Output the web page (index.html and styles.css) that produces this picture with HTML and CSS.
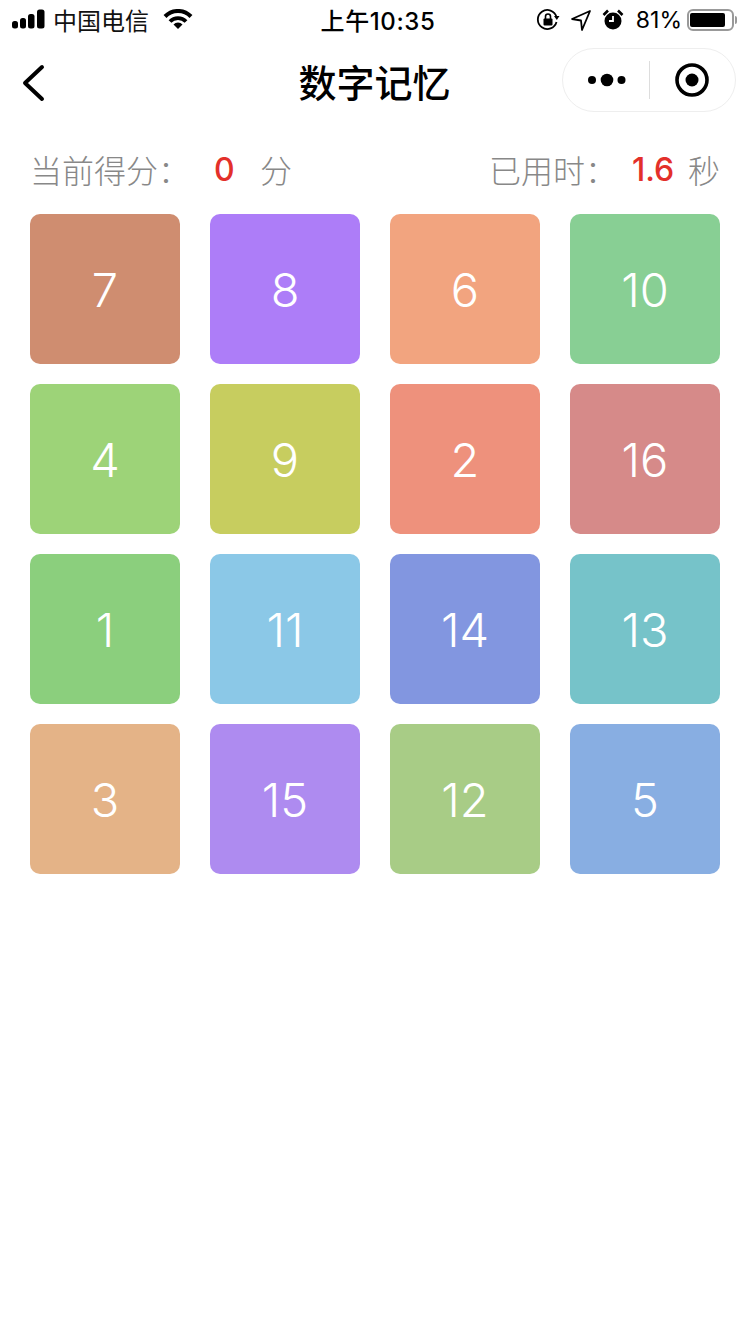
FILE: index.html
```html
<!DOCTYPE html>
<html lang="en">
<head>
    <meta charset="UTF-8">
    <meta name="viewport" content="width=device-width, initial-scale=1.0">
    <title>数字记忆</title>
    <link rel="stylesheet" href="styles.css">
</head>
<body>
    <div class="status-bar">
        <div class="status-left">
            <svg class="signal" width="33" height="20" viewBox="0 0 33 20">
                <rect x="0" y="12" width="6" height="7.500" rx="2.500" fill="#000"/>
                <rect x="8" y="9" width="6" height="10.500" rx="2.500" fill="#000"/>
                <rect x="16" y="5" width="6.500" height="14.500" rx="2.500" fill="#000"/>
                <rect x="25" y="0.500" width="7.500" height="19" rx="2.500" fill="#000"/>
            </svg>
            <span class="carrier">中国电信</span>
            <svg class="wifi" width="30" height="20" viewBox="0 0 30 20">
                <path d="M2 7.500 A18 18 0 0 1 28 7.500" fill="none" stroke="#000" stroke-width="4"/>
                <path d="M7 12.500 A11 11 0 0 1 23 12.500" fill="none" stroke="#000" stroke-width="3.800"/>
                <path d="M10.500 15.500 A6 6 0 0 1 19.500 15.500 L15 20 Z" fill="#000"/>
            </svg>
        </div>
        <div class="status-time">上午10:35</div>
        <div class="status-right">
            <svg width="24" height="24" viewBox="0 0 24 24">
                <path d="M20.500 14 A9.500 9.500 0 1 1 20.500 9" fill="none" stroke="#000" stroke-width="1.800"/>
                <path d="M18 8 L23.500 8 L20.800 12 Z" fill="#000"/>
                <rect x="7.500" y="10.500" width="9" height="7" rx="1" fill="#000"/>
                <path d="M9.500 11 V8.500 A2.500 2.500 0 0 1 14.500 8.500 V11" fill="none" stroke="#000" stroke-width="1.600"/>
            </svg>
            <svg width="22" height="24" viewBox="0 0 22 24">
                <path d="M20 3 L2 11 L11 12.500 L12 22 Z" fill="none" stroke="#000" stroke-width="1.800" stroke-linejoin="round"/>
            </svg>
            <svg width="22" height="24" viewBox="0 0 22 24">
                <circle cx="11" cy="13" r="8.500" fill="#000"/>
                <path d="M11 8 V13 H7" fill="none" stroke="#fff" stroke-width="1.800"/>
                <path d="M1.500 7 L6 2.500 M20.500 7 L16 2.500" stroke="#000" stroke-width="2.600"/>
            </svg>
            <span class="battery-text">81%</span>
            <div class="battery">
                <div class="battery-level"></div>
            </div>
            <div class="battery-cap"></div>
        </div>
    </div>

    <div class="nav-bar">
        <svg class="back" width="26" height="38" viewBox="0 0 26 38">
            <path d="M22 3 L5 19 L22 35" fill="none" stroke="#000" stroke-width="4" stroke-linecap="round" stroke-linejoin="round"/>
        </svg>
        <h1 class="nav-title">数字记忆</h1>
        <div class="capsule">
            <div class="capsule-part">
                <svg class="menu-dots" width="38" height="14" viewBox="0 0 38 14">
                    <circle cx="4" cy="7" r="4" fill="#000"/>
                    <circle cx="19" cy="7" r="6.300" fill="#000"/>
                    <circle cx="33.500" cy="7" r="4" fill="#000"/>
                </svg>
            </div>
            <div class="capsule-line"></div>
            <div class="capsule-part">
                <svg width="34" height="34" viewBox="0 0 34 34">
                    <circle cx="17" cy="17" r="15" fill="none" stroke="#000" stroke-width="3.600"/>
                    <circle cx="17" cy="17" r="6.500" fill="#000"/>
                </svg>
            </div>
        </div>
    </div>

    <div class="score-row">
        <div class="score-group">
            <span class="score-label">当前得分：</span>
            <span class="score-value score-zero">0</span>
            <span class="score-unit">分</span>
        </div>
        <div class="score-group">
            <span class="time-label">已用时：</span>
            <span class="score-value time-value">1.6</span>
            <span class="time-unit">秒</span>
        </div>
    </div>

    <div class="grid">
        <div class="cell c1">7</div>
        <div class="cell c2">8</div>
        <div class="cell c3">6</div>
        <div class="cell c4">10</div>
        <div class="cell c5">4</div>
        <div class="cell c6">9</div>
        <div class="cell c7">2</div>
        <div class="cell c8">16</div>
        <div class="cell c9">1</div>
        <div class="cell c10">11</div>
        <div class="cell c11">14</div>
        <div class="cell c12">13</div>
        <div class="cell c13">3</div>
        <div class="cell c14">15</div>
        <div class="cell c15">12</div>
        <div class="cell c16">5</div>
    </div>
</body>
</html>
```

FILE: styles.css
```css
/* Global Styles */
* {
    box-sizing: border-box;
    margin: 0;
    padding: 0;
}

body {
    width: 750px;
    height: 1334px;
    background-color: #ffffff;
    color: #000;
    font-family: "Inter", "Noto Sans CJK SC", sans-serif;
    overflow: hidden;
}

/* Status Bar */
.status-bar {
    height: 40px;
    padding: 0 13px 2px 12px;
    display: grid;
    grid-template-columns: 1fr auto 1fr;
    align-items: center;
}

.status-left,
.status-right {
    display: flex;
    align-items: center;
}

.status-right {
    justify-content: flex-end;
    padding-top: 2px;
}

.signal {
    margin-right: 8px;
}

.carrier {
    font-size: 24px;
    margin-right: 14px;
    color: #111;
}

.status-time {
    font-size: 24px;
    font-weight: 500;
    letter-spacing: 0.6px;
    margin-left: 7px;
}

.status-right svg {
    margin-right: 10px;
}

.battery-text {
    font-size: 23px;
    margin-left: 2px;
    margin-right: 5px;
}

.battery {
    width: 47px;
    height: 22px;
    border: 2px solid #999;
    border-radius: 6px;
    padding: 2px 1px;
}

.battery-level {
    width: 85%;
    height: 100%;
    background-color: #000;
    border-radius: 2px;
}

.battery-cap {
    width: 2px;
    height: 8px;
    margin-left: 1px;
    background-color: #999;
    border-radius: 0 2px 2px 0;
}

/* Nav Bar */
.nav-bar {
    height: 88px;
    padding-bottom: 6px;
    position: relative;
    display: flex;
    align-items: center;
    justify-content: center;
}

.back {
    position: absolute;
    left: 20px;
    top: 24px;
}

.nav-title {
    font-size: 38px;
    font-weight: 500;
    line-height: 1;
    margin-left: -1px;
    font-family: "Noto Sans CJK SC", sans-serif;
}

.capsule {
    position: absolute;
    left: 562px;
    top: 8px;
    width: 174px;
    height: 64px;
    border: 1px solid #eeeeee;
    border-radius: 32px;
    display: flex;
    align-items: center;
}

.capsule-part {
    flex: 1;
    display: flex;
    align-items: center;
    justify-content: center;
}

.menu-dots {
    margin-left: 3px;
}

.capsule-line {
    width: 1px;
    height: 38px;
    background-color: #dddddd;
}

/* Score Row */
.score-row {
    height: 60px;
    margin-top: 11px;
    padding: 0 30px;
    display: flex;
    justify-content: space-between;
    align-items: center;
    font-size: 32px;
    color: #888888;
}

.score-group {
    display: flex;
    align-items: center;
    font-family: "Noto Sans CJK SC", sans-serif;
    font-weight: 300;
}

.score-value {
    color: #e3302a;
    font-family: "Inter", sans-serif;
    font-weight: 500;
}

.score-label {
    width: 184px;
}

.score-zero {
    width: 46px;
}

.time-label {
    width: 143px;
}

.time-value {
    width: 56px;
}

/* Number Grid */
.grid {
    margin-top: 15px;
    padding: 0 30px;
    display: grid;
    grid-template-columns: repeat(4, 150px);
    grid-auto-rows: 150px;
    column-gap: 30px;
    row-gap: 20px;
}

.cell {
    display: flex;
    align-items: center;
    justify-content: center;
    border-radius: 10px;
    color: #fff;
    font-size: 47px;
    font-weight: 300;
}

.c1 { background-color: #cf8d70; }
.c2 { background-color: #ad7df8; }
.c3 { background-color: #f2a47f; }
.c4 { background-color: #88cf94; }
.c5 { background-color: #9dd378; }
.c6 { background-color: #c7cd5f; }
.c7 { background-color: #ee917c; }
.c8 { background-color: #d68a89; }
.c9 { background-color: #8bcf7d; }
.c10 { background-color: #8bc8e7; }
.c11 { background-color: #8296e0; }
.c12 { background-color: #76c3c9; }
.c13 { background-color: #e4b387; }
.c14 { background-color: #ae8bf0; }
.c15 { background-color: #a8cc86; }
.c16 { background-color: #88aee2; }
```
